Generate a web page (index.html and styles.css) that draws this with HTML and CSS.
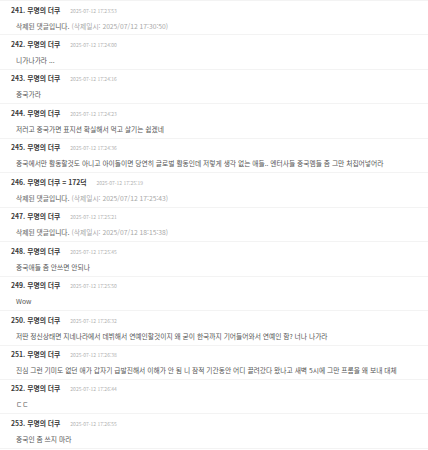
FILE: index.html
```html
<!DOCTYPE html>
<html lang="ko">
<head>
  <meta charset="UTF-8" />
  <meta name="viewport" content="width=device-width, initial-scale=1.0"/>
  <title>댓글</title>
  <link rel="stylesheet" href="styles.css">
</head>
<body>
  <ul class="comments">
    <li class="comment">
      <div class="comment-head"><span class="author">241. 무명의 더쿠</span><span class="date">2025-07-12 17:23:53</span></div>
      <div class="comment-body"><span class="deleted">삭제된 댓글입니다.</span> <span class="deleted-at">(삭제일시: 2025/07/12 17:30:50)</span></div>
    </li>
    <li class="comment">
      <div class="comment-head"><span class="author">242. 무명의 더쿠</span><span class="date">2025-07-12 17:24:00</span></div>
      <div class="comment-body">니가나가라 ...</div>
    </li>
    <li class="comment">
      <div class="comment-head"><span class="author">243. 무명의 더쿠</span><span class="date">2025-07-12 17:24:16</span></div>
      <div class="comment-body">중국가라</div>
    </li>
    <li class="comment">
      <div class="comment-head"><span class="author">244. 무명의 더쿠</span><span class="date">2025-07-12 17:24:23</span></div>
      <div class="comment-body">저러고 중국가면 표지션 확실해서 먹고 살기는 쉽겠네</div>
    </li>
    <li class="comment">
      <div class="comment-head"><span class="author">245. 무명의 더쿠</span><span class="date">2025-07-12 17:24:36</span></div>
      <div class="comment-body">중국에서만 활동할것도 아니고 아이돌이면 당연히 글로벌 활동인데 저렇게 생각 없는 애들.. 엔터사들 중국멤들 좀 그만 처집어넣어라</div>
    </li>
    <li class="comment">
      <div class="comment-head"><span class="author">246. 무명의 더쿠 = 172덕</span><span class="date">2025-07-12 17:25:19</span></div>
      <div class="comment-body"><span class="deleted">삭제된 댓글입니다.</span> <span class="deleted-at">(삭제일시: 2025/07/12 17:25:43)</span></div>
    </li>
    <li class="comment">
      <div class="comment-head"><span class="author">247. 무명의 더쿠</span><span class="date">2025-07-12 17:25:21</span></div>
      <div class="comment-body"><span class="deleted">삭제된 댓글입니다.</span> <span class="deleted-at">(삭제일시: 2025/07/12 18:15:38)</span></div>
    </li>
    <li class="comment">
      <div class="comment-head"><span class="author">248. 무명의 더쿠</span><span class="date">2025-07-12 17:25:45</span></div>
      <div class="comment-body">중국애들 좀 안쓰면 안되나</div>
    </li>
    <li class="comment">
      <div class="comment-head"><span class="author">249. 무명의 더쿠</span><span class="date">2025-07-12 17:25:50</span></div>
      <div class="comment-body">Wow</div>
    </li>
    <li class="comment">
      <div class="comment-head"><span class="author">250. 무명의 더쿠</span><span class="date">2025-07-12 17:26:32</span></div>
      <div class="comment-body">저딴 정신상태면 지네나라에서 데뷔해서 연예인할것이지 왜 굳이 한국까지 기어들어와서 연예인 함? 너나 나가라</div>
    </li>
    <li class="comment">
      <div class="comment-head"><span class="author">251. 무명의 더쿠</span><span class="date">2025-07-12 17:26:38</span></div>
      <div class="comment-body">진심 그런 기미도 없던 애가 갑자기 급발진해서 이해가 안 됨 니 잠적 기간동안 어디 끌려갔다 왔나고 새벽 5시에 그만 프롬을 왜 보내 대체</div>
    </li>
    <li class="comment">
      <div class="comment-head"><span class="author">252. 무명의 더쿠</span><span class="date">2025-07-12 17:26:44</span></div>
      <div class="comment-body">ㄷㄷ</div>
    </li>
    <li class="comment">
      <div class="comment-head"><span class="author">253. 무명의 더쿠</span><span class="date">2025-07-12 17:26:55</span></div>
      <div class="comment-body">중국인 좀 쓰지 마라</div>
    </li>
  </ul>
</body>
</html>
```

FILE: styles.css
```css
body {
  margin: 0;
  padding: 0;
  background: #fff;
  font-family: "Noto Sans CJK KR", "Noto Sans", sans-serif;
  color: #555;
}
.comments {
  list-style: none;
  margin: 0;
  padding: 0;
  border-top: 1px solid #f3f3f3;
}
.comment {
  padding: 4.5px 11px 3.96px;
  border-bottom: 1px solid #f3f3f3;
}
.comment-head {
  display: flex;
  align-items: center;
  height: 9px;
  line-height: 9px;
  white-space: nowrap;
}
.author {
  font-size: 6.8px;
  font-weight: bold;
  color: #3a3a3a;
}
.date {
  margin-left: 10px;
  font-size: 5px;
  color: #b0b0b0;
}
.comment-body {
  margin-top: 7px;
  margin-left: 5px;
  height: 9px;
  line-height: 9px;
  font-size: 6.75px;
  color: #555;
  white-space: nowrap;
}
.deleted {
  font-weight: 500;
  color: #777;
}
.deleted-at {
  color: #a8a8a8;
}
```
